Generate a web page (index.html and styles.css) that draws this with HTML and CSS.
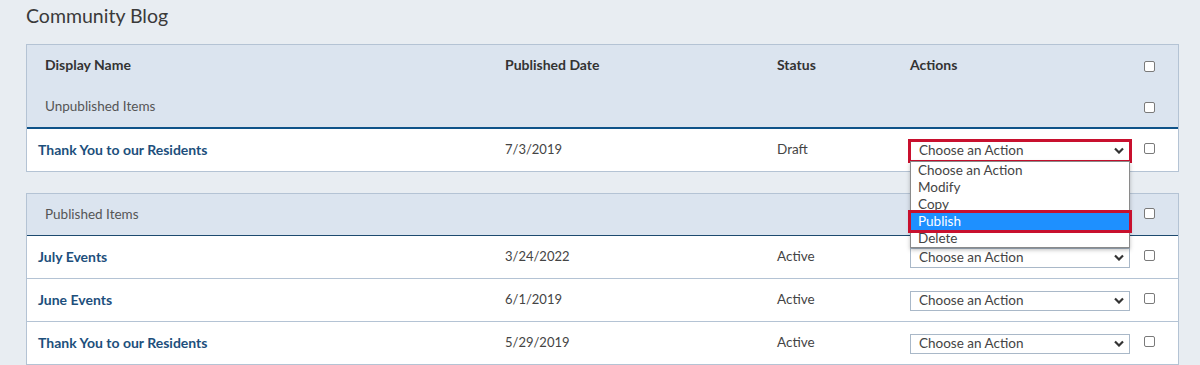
FILE: index.html
```html
<!DOCTYPE html>
<html>
<head>
<meta charset="utf-8">
<title>Community Blog</title>
<link rel="stylesheet" href="styles.css">
</head>
<body>
<div class="page">
  <h1 class="title">Community Blog</h1>

  <section class="panel">
    <div class="head head-strong">
      <div class="row hrow">
        <div class="c name">Display Name</div>
        <div class="c">Published Date</div>
        <div class="c">Status</div>
        <div class="c">Actions</div>
        <div class="c"><span class="cb"></span></div>
      </div>
      <div class="row hrow">
        <div class="c name group">Unpublished Items</div>
        <div class="c"></div>
        <div class="c"></div>
        <div class="c"></div>
        <div class="c"><span class="cb"></span></div>
      </div>
    </div>
    <div class="row item">
      <div class="c title-cell">Thank You to our Residents</div>
      <div class="c date">7/3/2019</div>
      <div class="c">Draft</div>
      <div class="c action-cell">
        <div class="select highlighted">
          <span>Choose an Action</span>
          <svg class="chev" width="10" height="7" viewBox="0 0 10 7"><polyline points="1,1.5 5,5.5 9,1.5" fill="none" stroke="#333" stroke-width="2.2"/></svg>
        </div>
        <ul class="menu">
          <li>Choose an Action</li>
          <li>Modify</li>
          <li>Copy</li>
          <li class="active">Publish</li>
          <li>Delete</li>
        </ul>
      </div>
      <div class="c"><span class="cb"></span></div>
    </div>
  </section>

  <section class="panel second">
    <div class="head">
      <div class="row hrow">
        <div class="c name group">Published Items</div>
        <div class="c"></div>
        <div class="c"></div>
        <div class="c"></div>
        <div class="c"><span class="cb"></span></div>
      </div>
    </div>
    <div class="row item">
      <div class="c title-cell">July Events</div>
      <div class="c date">3/24/2022</div>
      <div class="c">Active</div>
      <div class="c">
        <div class="select">
          <span>Choose an Action</span>
          <svg class="chev" width="10" height="7" viewBox="0 0 10 7"><polyline points="1,1.5 5,5.5 9,1.5" fill="none" stroke="#333" stroke-width="2.2"/></svg>
        </div>
      </div>
      <div class="c"><span class="cb"></span></div>
    </div>
    <div class="row item">
      <div class="c title-cell">June Events</div>
      <div class="c date">6/1/2019</div>
      <div class="c">Active</div>
      <div class="c">
        <div class="select">
          <span>Choose an Action</span>
          <svg class="chev" width="10" height="7" viewBox="0 0 10 7"><polyline points="1,1.5 5,5.5 9,1.5" fill="none" stroke="#333" stroke-width="2.2"/></svg>
        </div>
      </div>
      <div class="c"><span class="cb"></span></div>
    </div>
    <div class="row item">
      <div class="c title-cell">Thank You to our Residents</div>
      <div class="c date">5/29/2019</div>
      <div class="c">Active</div>
      <div class="c">
        <div class="select">
          <span>Choose an Action</span>
          <svg class="chev" width="10" height="7" viewBox="0 0 10 7"><polyline points="1,1.5 5,5.5 9,1.5" fill="none" stroke="#333" stroke-width="2.2"/></svg>
        </div>
      </div>
      <div class="c"><span class="cb"></span></div>
    </div>
  </section>
</div>
</body>
</html>
```

FILE: styles.css
```css
* { box-sizing: border-box; }

html, body {
  margin: 0;
  padding: 0;
  background: #e8edf2;
  font-family: Lato, "Open Sans", "Noto Sans", sans-serif;
  font-size: 13.5px;
  color: #444;
  overflow: hidden;
}

.page {
  padding: 0 21px 0 26px;
}

.title {
  margin: 0 0 10px 0;
  height: 34px;
  line-height: 32px;
  font-size: 19.5px;
  font-weight: 400;
  color: #3a3a3a;
}

.panel {
  background: #fff;
  border: 1px solid #b4c3d4;
}

.panel.second {
  margin-top: 21px;
}

.head {
  background: #dbe4ef;
  border-bottom: 1px solid #1d4a6f;
}

.head.head-strong {
  border-bottom: 2px solid #0f5389;
}

.row {
  display: grid;
  grid-template-columns: 478px 272px 133px 234px 1fr;
  align-items: center;
}

.c {
  padding-bottom: 2px;
}

.hrow {
  height: 41px;
}

.hrow .c {
  font-weight: 700;
  font-size: 14px;
  color: #333;
}

.hrow .name {
  padding-left: 18px;
}

.hrow .group {
  font-weight: 400;
  font-size: 13.5px;
  color: #555;
}

.item {
  height: 42px;
}

.item + .item {
  border-top: 1px solid #b4c3d4;
  height: 43px;
}

.item .c {
  color: #444;
}

.item .date {
  font-size: 13px;
}

.item .title-cell {
  padding-left: 11px;
  font-weight: 700;
  font-size: 14px;
  color: #1d4f7c;
}

.cb {
  display: block;
  width: 11px;
  height: 11px;
  border: 1px solid #7a7a7a;
  border-radius: 2px;
  background: #fff;
  margin-top: 3px;
}

.second .hrow .cb {
  margin-top: 0;
}

.item .cb {
  margin-top: -1px;
}

.action-cell {
  position: relative;
}

.item .action-cell,
.item .c:nth-child(4) {
  padding-bottom: 0;
}

.select {
  display: flex;
  align-items: center;
  justify-content: space-between;
  width: 220px;
  height: 20px;
  padding: 0 5px 0 8px;
  border: 1px solid #a9b8c8;
  background: #fff;
  color: #444;
  margin-top: 1px;
}

.select span {
  padding-bottom: 1px;
}

.select.highlighted {
  outline: 3px solid #c8102e;
  outline-offset: -1px;
  border-color: #fff;
}

.chev {
  display: block;
}

.menu {
  position: absolute;
  z-index: 5;
  left: 0;
  top: 21px;
  width: 220px;
  margin: 0;
  padding: 0;
  list-style: none;
  background: #fff;
  border: 1px solid #8a8a8a;
  box-shadow: 0 2px 4px rgba(0, 0, 0, 0.25);
}

.menu li {
  height: 17px;
  line-height: 16px;
  padding-left: 7px;
  color: #444;
}

.menu li.active {
  background: #1e90ff;
  color: #fff;
  outline: 3px solid #c8102e;
  outline-offset: 0;
}
```
